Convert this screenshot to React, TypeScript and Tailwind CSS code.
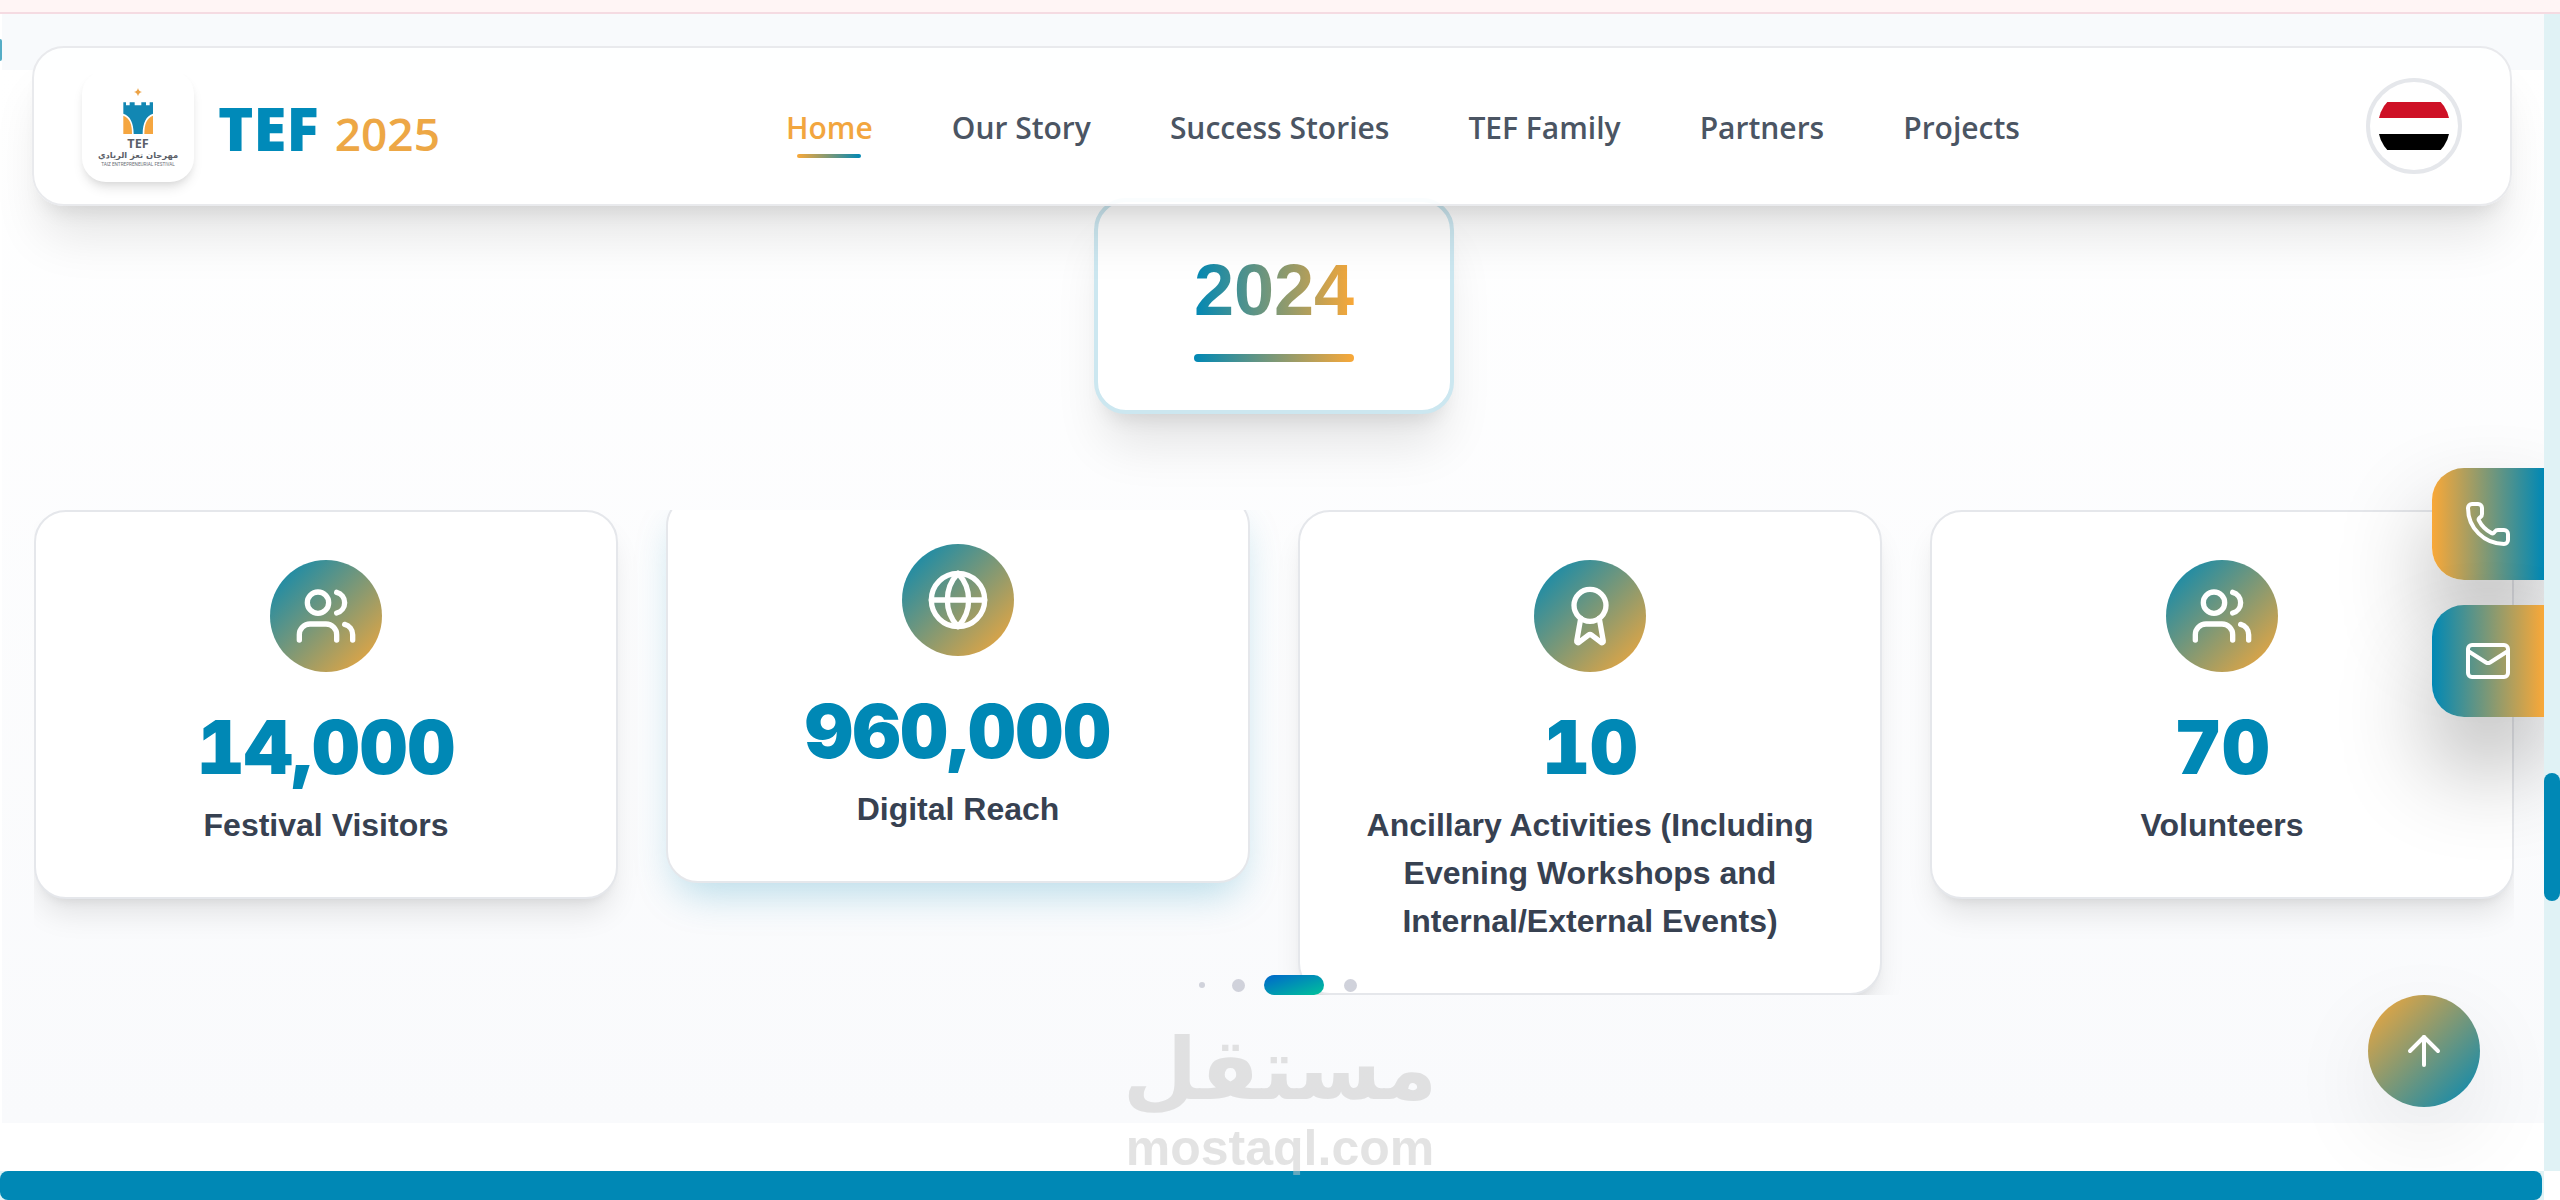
import React from 'react';
import { ArrowUp, Award, Globe, Mail, Phone, Users, type LucideIcon } from 'lucide-react';

interface Stat {
  icon: LucideIcon;
  value: string;
  label: string;
  active?: boolean;
}

const navLinks = ['Home', 'Our Story', 'Success Stories', 'TEF Family', 'Partners', 'Projects'];

const stats: Stat[] = [
  { icon: Users, value: '14,000', label: 'Festival Visitors' },
  { icon: Globe, value: '960,000', label: 'Digital Reach', active: true },
  { icon: Award, value: '10', label: 'Ancillary Activities (Including Evening Workshops and Internal/External Events)' },
  { icon: Users, value: '70', label: 'Volunteers' },
];

const TefLogo: React.FC = () => (
  <svg viewBox="6 0 336 336" className="h-28 w-28" role="img" aria-label="Taiz Entrepreneurial Festival">
    <path d="M174 54Q176 64 186 66Q176 68 174 79Q172 68 162 66Q172 64 174 54Z" fill="#eca347" />
    <path
      d="M130 97h8v9h11v-9h15v9h20v-9h14v9h11v-9h10v34C199 137 188 158 188 192H161C161 158 150 137 130 131Z"
      fill="#1287b3"
    />
    <path d="M130 137C149 144 156 162 156 192H130Z" fill="#f5a640" />
    <path d="M219 137C200 144 193 162 193 192H219Z" fill="#f5a640" />
    <text x="174" y="233" textAnchor="middle" fontSize="38" className="fill-[#5b6068] font-['Open_Sans',sans-serif] font-bold">
      TEF
    </text>
    <text x="174" y="264" textAnchor="middle" fontSize="25" direction="rtl" className="fill-[#5b6068] font-['DejaVu_Sans',sans-serif] font-bold">
      مهرجان تعز الريادي
    </text>
    <text x="174" y="288" textAnchor="middle" fontSize="14" className="fill-[#6b6f76] font-['Roboto',sans-serif]">
      TAIZ ENTREPRENEURIAL FESTIVAL
    </text>
  </svg>
);

const Header: React.FC = () => (
  <header className="absolute inset-x-8 top-8 z-20 flex items-center justify-between rounded-[32px] border-2 border-[#e9eaed] bg-white/90 px-12 py-[22px] font-['Open_Sans',sans-serif] shadow-[0_40px_50px_-10px_rgba(0,0,0,0.1),0_16px_20px_-12px_rgba(0,0,0,0.1)]">
    <a href="#home" className="flex items-center gap-6">
      <span className="overflow-hidden rounded-3xl bg-white shadow-[0_8px_12px_-2px_rgba(0,0,0,0.1),0_4px_8px_-4px_rgba(0,0,0,0.1)]">
        <TefLogo />
      </span>
      <span className="flex items-baseline gap-4 pt-2">
        <span className="text-[60px] leading-[72px] font-extrabold text-[#008ab9]">TEF</span>
        <span className="text-[46px] leading-[72px] font-semibold text-[#eda745]">2025</span>
      </span>
    </a>

    <nav className="flex items-center gap-[79px] pt-1">
      {navLinks.map((link) => (
        <a
          key={link}
          href="#"
          className={`relative text-[30px] leading-[48px] font-semibold ${link === 'Home' ? 'text-[#f2a63f]' : 'text-[#4b5563]'}`}
        >
          {link}
          {link === 'Home' && (
            <span className="absolute top-[50px] left-1/2 h-1 w-16 -translate-x-1/2 rounded-full bg-linear-to-r/srgb from-[#f9a838] to-[#0088b5]" />
          )}
        </a>
      ))}
    </nav>

    <button
      type="button"
      aria-label="Change language"
      className="flex h-24 w-24 items-center justify-center rounded-full border-4 border-gray-200 bg-white"
    >
      <span className="flex h-[72px] w-[72px] flex-col justify-center overflow-hidden rounded-full">
        <span className="h-4 bg-[#ce1126]" />
        <span className="h-4 bg-white" />
        <span className="h-4 bg-black" />
      </span>
    </button>
  </header>
);

const StatCard: React.FC<{ stat: Stat }> = ({ stat }) => {
  const Icon = stat.icon;

  return (
    <article
      className={`flex flex-col items-center rounded-[32px] border-2 border-gray-200 bg-white p-12 text-center ${
        stat.active
          ? '-translate-y-4 shadow-[0_20px_40px_-10px_rgba(0,136,181,0.28)]'
          : 'shadow-[0_20px_30px_-6px_rgba(0,0,0,0.1),0_8px_12px_-8px_rgba(0,0,0,0.1)]'
      }`}
    >
      <div className="mb-8 flex h-28 w-28 items-center justify-center rounded-full bg-linear-to-br/srgb from-[#0088b5] to-[#f9a838]">
        <Icon className="h-16 w-16 text-white" />
      </div>
      <p className="mb-[11px] font-['Inter',sans-serif] text-[74px] leading-[86px] font-black text-[#0088b5] tabular-nums">
        {stat.value}
      </p>
      <h3 className="text-[32px] leading-[48px] font-bold text-[#374151]">{stat.label}</h3>
    </article>
  );
};

const Pagination: React.FC = () => (
  <div className="absolute inset-x-0 bottom-0 z-10 flex items-center justify-center gap-4 pl-1">
    <button type="button" aria-label="Slide 1" className="flex h-5 w-5 items-center justify-center">
      <span className="h-[6px] w-[6px] rounded-full bg-[#d0d2db]" />
    </button>
    <button type="button" aria-label="Slide 2" className="flex h-5 w-5 items-center justify-center">
      <span className="h-[13px] w-[13px] rounded-full bg-[#d0d2db]" />
    </button>
    <button type="button" aria-label="Slide 3" className="h-5 w-15 rounded-full bg-linear-to-br/srgb from-[#0066cc] to-[#00c39a]" />
    <button type="button" aria-label="Slide 4" className="flex h-5 w-5 items-center justify-center">
      <span className="h-[13px] w-[13px] rounded-full bg-[#d0d2db]" />
    </button>
  </div>
);

const YearSection: React.FC = () => (
  <section className="-mr-0.5 ml-0.5 flex flex-col items-center gap-24 bg-linear-to-b/srgb from-white to-[#f9fafc] px-8 py-32">
    <div className="rounded-[32px] border-4 border-[#cce7f0] bg-white px-24 py-12 shadow-[0_40px_50px_-10px_rgba(0,0,0,0.1),0_16px_20px_-12px_rgba(0,0,0,0.1)]">
      <h2 className="bg-linear-to-r/srgb from-[#0088b5] to-[#f9a838] bg-clip-text text-[72px] leading-[80px] font-bold text-transparent">
        2024
      </h2>
      <div className="mt-6 h-2 rounded-full bg-linear-to-r/srgb from-[#0088b5] to-[#f9a838]" />
    </div>

    <div className="relative grid w-full grid-cols-4 items-start gap-12 overflow-hidden">
      {stats.map((stat) => (
        <StatCard key={stat.label} stat={stat} />
      ))}
      <Pagination />
    </div>
  </section>
);

const ContactButtons: React.FC = () => (
  <div className="absolute top-[454px] right-0 z-10 flex flex-col gap-[25px]">
    <a
      href="#phone"
      aria-label="Call us"
      className="flex h-28 w-28 items-center justify-center rounded-l-[32px] bg-linear-to-r/srgb from-[#f9a838] to-[#0088b5] text-white shadow-[0_50px_100px_-12px_rgba(0,0,0,0.45)]"
    >
      <Phone className="h-12 w-12" />
    </a>
    <a
      href="#mail"
      aria-label="Email us"
      className="flex h-28 w-28 items-center justify-center rounded-l-[32px] bg-linear-to-r/srgb from-[#0088b5] to-[#f9a838] text-white shadow-[0_50px_100px_-12px_rgba(0,0,0,0.45)]"
    >
      <Mail className="h-12 w-12" />
    </a>
  </div>
);

const Watermark: React.FC = () => (
  <div className="pointer-events-none absolute inset-x-0 bottom-[23px] z-30 flex flex-col items-center text-[#c8c8c8] opacity-50">
    <span dir="rtl" className="font-['DejaVu_Sans',sans-serif] text-[86px] leading-[100px] font-bold">
      مستقل
    </span>
    <span className="text-[50px] leading-[58px] font-bold">mostaql.com</span>
  </div>
);

const App: React.FC = () => {
  return (
    <div className="relative flex min-h-screen flex-col overflow-hidden bg-white font-['Liberation_Sans',Arial,sans-serif]">
      <div className="h-[14px] border-b-2 border-[#f5dbe2] bg-[#fff5f5]" />

      <div className="flex flex-1">
        <main className="relative flex-1 overflow-hidden">
          <div className="ml-0.5 h-14 bg-[#f8fafc]" />
          <span className="absolute top-[25px] left-0 h-[22px] w-0.5 rounded-r-full bg-[#55adc6]" />
          <Header />
          <YearSection />
          <ContactButtons />
          <button
            type="button"
            aria-label="Back to top"
            className="absolute right-16 bottom-16 z-10 flex h-28 w-28 items-center justify-center rounded-full bg-linear-to-br/srgb from-[#f9a838] to-[#0088b5] text-white shadow-[0_30px_90px_rgba(0,0,0,0.08)]"
          >
            <ArrowUp className="h-12 w-12" />
          </button>
        </main>

        {/* vertical scroll track */}
        <div className="flex w-4 flex-col bg-[#e0f2f5] pt-[759px]">
          <div className="h-32 rounded-full bg-[#0088b5]" />
        </div>
      </div>

      {/* horizontal scroll track */}
      <div className="mr-4 bg-[#e0f2f5] pr-0.5">
        <div className="h-[29px] rounded-lg bg-[#0088b5]" />
      </div>

      <Watermark />
    </div>
  );
};

export default App;
